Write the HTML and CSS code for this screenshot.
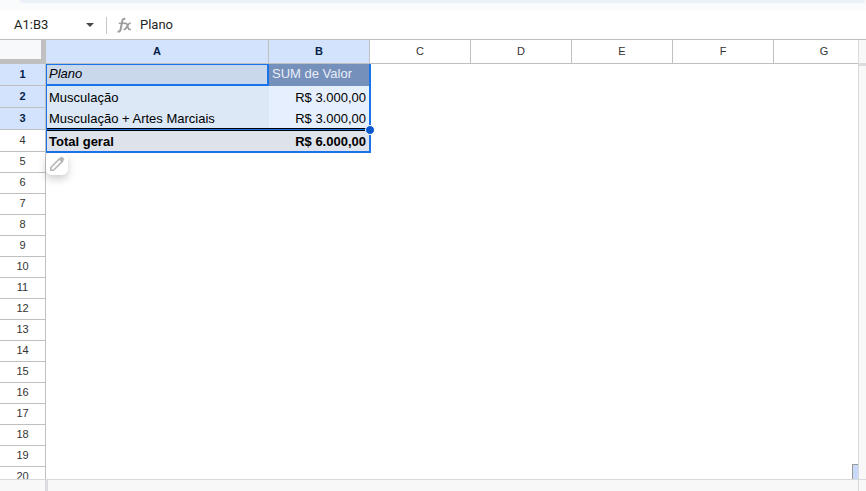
FILE: index.html
```html
<!DOCTYPE html>
<html lang="pt-BR">
<head>
  <meta charset="UTF-8">
  <meta name="viewport" content="width=device-width, initial-scale=1.0">
  <title>Planilha</title>
  <link rel="stylesheet" href="styles.css">
</head>
<body>
  <div class="toolbar-edge"><div class="toolbar-pill"></div></div>

  <div class="formula-bar">
    <input class="name-box" type="text" value="A1:B3" aria-label="Caixa de nome">
    <button class="name-arrow" type="button" aria-label="Intervalos nomeados">
      <svg width="8" height="4" viewBox="0 0 8 4"><path d="M0 0h8L4 4z" fill="#444746"/></svg>
    </button>
    <span class="divider"></span>
    <svg class="fx" width="15" height="16" viewBox="0 0 15 16" fill="none" stroke="#9a9c9b">
      <path d="M8.3 2.2C6.7 1.3 5.7 2 5.3 4L3.6 12.5C3.2 14.4 2.2 15 .6 14.3" stroke-width="2"/>
      <path d="M1.8 6.3h5.8" stroke-width="1.5"/>
      <path d="M7.2 6.3h1.6c.8 0 1 .4 1.3 1.3l1.2 3.6c.3.9.6 1.3 1.4 1.3h1.3M13.8 6.3c-1.2-.3-1.8.2-2.5 1.2l-2.4 3.8c-.6 1-1.3 1.4-2.4 1.1" stroke-width="1.7"/>
    </svg>
    <input class="formula" type="text" value="Plano" aria-label="Barra de fórmulas">
  </div>

  <main class="workspace">
    <div class="grid-view">
      <table class="sheet">
        <colgroup>
          <col class="col-rows"><col class="col-a"><col><col><col><col><col><col>
        </colgroup>
        <thead>
          <tr>
            <th class="corner"></th>
            <th class="on" scope="col">A</th>
            <th class="on" scope="col">B</th>
            <th scope="col">C</th>
            <th scope="col">D</th>
            <th scope="col">E</th>
            <th scope="col">F</th>
            <th scope="col">G</th>
          </tr>
        </thead>
        <tbody>
          <tr class="tall title-row">
            <th class="on" scope="row">1</th>
            <td class="plan active">Plano</td>
            <td class="sum-head">SUM de Valor</td>
          </tr>
          <tr class="tall">
            <th class="on" scope="row">2</th>
            <td class="plan">Musculação</td>
            <td class="value">R$ 3.000,00</td>
          </tr>
          <tr class="tall last-item">
            <th class="on" scope="row">3</th>
            <td class="plan">Musculação + Artes Marciais</td>
            <td class="value">R$ 3.000,00<span class="fill-handle"></span></td>
          </tr>
          <tr class="tall total">
            <th scope="row">4</th>
            <td class="plan">Total geral</td>
            <td class="value">R$ 6.000,00</td>
          </tr>
          <tr>
            <th scope="row">5</th>
            <td>
              <button class="edit" type="button" aria-label="Editar tabela dinâmica">
                <svg width="16" height="16" viewBox="0 0 16 16" fill="none" stroke="#b7b7b7" stroke-width="1.6">
                  <path d="M1.8 11.5 10.6 2.7l2.7 2.7-8.8 8.8H1.8z"/>
                  <path d="M9.6 3.2 12 .9c.4-.4 1-.4 1.4 0l1.7 1.7c.4.4.4 1 0 1.4l-2.3 2.4z" fill="#b7b7b7" stroke="none"/>
                </svg>
              </button>
            </td>
          </tr>
          <tr><th scope="row">6</th></tr>
          <tr><th scope="row">7</th></tr>
          <tr><th scope="row">8</th></tr>
          <tr><th scope="row">9</th></tr>
          <tr><th scope="row">10</th></tr>
          <tr><th scope="row">11</th></tr>
          <tr><th scope="row">12</th></tr>
          <tr><th scope="row">13</th></tr>
          <tr><th scope="row">14</th></tr>
          <tr><th scope="row">15</th></tr>
          <tr><th scope="row">16</th></tr>
          <tr><th scope="row">17</th></tr>
          <tr><th scope="row">18</th></tr>
          <tr><th scope="row">19</th></tr>
          <tr><th scope="row">20</th></tr>
        </tbody>
      </table>
      <div class="side-tab"></div>
    </div>
    <div class="scroll-y"><div class="freeze-y"></div></div>
    <div class="scroll-x"><div class="freeze-x"></div></div>
    <div class="scroll-corner"></div>
  </main>
</body>
</html>
```
FILE: styles.css
```css
* {
  box-sizing: border-box;
}
body {
  margin: 0;
  height: 100vh;
  display: flex;
  flex-direction: column;
  overflow: hidden;
  background: #fff;
  color: #000;
  font-family: "Liberation Sans", Arial, sans-serif;
  font-size: 13px;
}
button {
  border: 0;
  padding: 0;
  cursor: pointer;
}

/* bottom edge of the toolbar */
.toolbar-edge {
  flex: none;
  height: 11px;
  padding: 0 1px 0 20px;
  background: #f9fbfd;
}
.toolbar-pill {
  height: 3px;
  background: #ebf1f9;
  border-radius: 0 0 12px 12px;
}

/* name box and formula bar */
.formula-bar {
  flex: none;
  display: flex;
  align-items: center;
  height: 29px;
  padding-left: 14px;
  border-bottom: 1px solid #c0c0c0;
}
.formula-bar input {
  border: 0;
  padding: 0 0 1px;
  outline: 0;
  background: none;
  font-family: Roboto, Arial, sans-serif;
  font-size: 13px;
  color: #1f1f1f;
}
.name-box {
  width: 64px;
}
.name-arrow {
  display: grid;
  place-items: center;
  width: 24px;
  height: 24px;
  background: none;
}
.divider {
  width: 1px;
  height: 17px;
  margin: 0 10px 0 4px;
  background: #c7c7c7;
}
.formula {
  flex: 1;
  margin-left: 8px;
}

/* grid plus scroll bars */
.workspace {
  flex: 1;
  min-height: 0;
  display: grid;
  grid-template-columns: minmax(0, 1fr) 8px;
  grid-template-rows: minmax(0, 1fr) 12px;
}
.grid-view {
  position: relative;
  overflow: hidden;
}
.sheet {
  width: 875px;
  table-layout: fixed;
  border-collapse: separate;
  border-spacing: 0;
}
.col-rows {
  width: 46px;
}
.col-a {
  width: 223px;
}
.sheet th {
  height: 21px;
  padding: 0 0 2px;
  border-right: 1px solid #c0c0c0;
  border-bottom: 1px solid #c0c0c0;
  background: #fff;
  color: #333;
  font-size: 11px;
  font-weight: 400;
  line-height: 14px;
  text-align: center;
}
.sheet thead th {
  height: 24px;
}
.sheet .tall th {
  height: 22px;
}
.sheet th.on {
  background: #d3e3fd;
  color: #041e49;
  font-weight: 700;
}
.sheet th.corner {
  background: #f8f9fa;
  border-right: 5px solid #c0c0c0;
  border-bottom: 5px solid #c0c0c0;
}
.sheet td {
  position: relative;
  padding: 1px 3px 0;
  line-height: 16px;
  white-space: nowrap;
}
.plan {
  background: #dce8f6;
}
.value {
  background: #e6effd;
  text-align: right;
}
.sheet .active {
  background: #c9d8ea;
  font-style: italic;
}
.sheet .title-row td {
  padding-top: 0;
  padding-bottom: 3px;
}
.sheet .last-item td {
  padding-top: 0;
  padding-bottom: 1px;
}
.sum-head {
  background: #7590ba;
  color: #e8eef8;
}
.sheet .total td {
  padding-top: 3px;
  background: #dee2ea;
  font-weight: 700;
}

/* selection outlines */
.active::after {
  content: "";
  position: absolute;
  inset: 0;
  border: 2px solid #1a73e8;
  border-width: 1px 2px 2px 1px;
  pointer-events: none;
}
.tall .plan {
  border-left: 1px solid #1a73e8;
  padding-left: 2px;
}
.tall .active {
  border-left: 0;
  padding-left: 3px;
}
.tall td:last-child {
  border-right: 1px solid #1a73e8;
  box-shadow: 1px 0 #1a73e8;
}
.total .plan,
.total .value {
  border-bottom: 1px solid #1a73e8;
  box-shadow: 0 1px #1a73e8;
}
.total td:last-child {
  box-shadow: 1px 0 #1a73e8, 0 1px #1a73e8, 1px 1px #1a73e8;
}
/* double rule above the total, selection edge between the lines */
.total td::before {
  content: "";
  position: absolute;
  left: 0;
  right: 0;
  top: -2px;
  height: 1px;
  border: 1px solid #000;
  border-width: 1px 0;
  background: #1a73e8;
}
.fill-handle {
  position: absolute;
  right: -6px;
  bottom: -5px;
  z-index: 2;
  width: 10px;
  height: 10px;
  border: 1px solid #fff;
  border-radius: 50%;
  background: #0b57d0;
}

.edit {
  position: absolute;
  top: 1px;
  left: 0;
  display: grid;
  place-items: center;
  width: 22px;
  height: 22px;
  border-radius: 6px;
  background: #fff;
  box-shadow: 0 4px 8px rgba(0, 0, 0, 0.2);
}

.side-tab {
  position: absolute;
  right: 0;
  bottom: 0;
  width: 6px;
  height: 15px;
  border: 1px solid #999;
  border-width: 1px 0 0 1px;
  background: #c9daf8;
}
.scroll-y,
.scroll-x,
.scroll-corner {
  background: #f8f8f8;
}
.scroll-y,
.scroll-corner {
  border-left: 1px solid #d9d9d9;
}
.scroll-x,
.scroll-corner {
  border-top: 1px solid #d9d9d9;
}
.scroll-y {
  padding-top: 23px;
}
.freeze-y {
  height: 3px;
  background: #dadce0;
}
.scroll-x {
  padding-left: 45px;
}
.freeze-x {
  width: 3px;
  height: 11px;
  background: #dadce0;
}
```
